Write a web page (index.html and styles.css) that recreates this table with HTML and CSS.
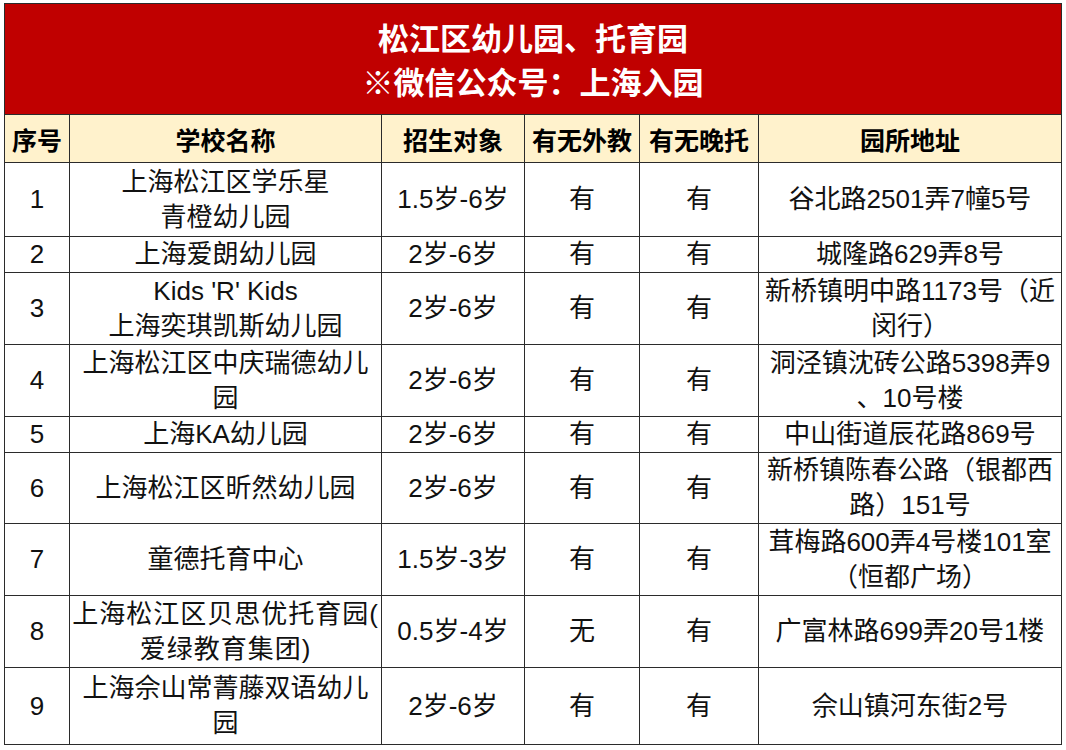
FILE: index.html
```html
<!DOCTYPE html>
<html lang="zh-CN">
<head>
<meta charset="utf-8">
<title>松江区幼儿园、托育园</title>
<link rel="stylesheet" href="styles.css">
</head>
<body>
<div class="sheet">
<table class="list">
  <colgroup>
    <col class="c-no">
    <col class="c-name">
    <col class="c-age">
    <col class="c-foreign">
    <col class="c-late">
    <col class="c-addr">
  </colgroup>
  <thead>
    <tr class="r-title">
      <th colspan="6" class="title">松江区幼儿园、托育园<br>※微信公众号：上海入园</th>
    </tr>
    <tr class="r-head">
      <th>序号</th>
      <th>学校名称</th>
      <th>招生对象</th>
      <th>有无外教</th>
      <th>有无晚托</th>
      <th>园所地址</th>
    </tr>
  </thead>
  <tbody>
    <tr class="r1">
      <td>1</td>
      <td>上海松江区学乐星<br>青橙幼儿园</td>
      <td>1.5岁-6岁</td>
      <td>有</td>
      <td>有</td>
      <td>谷北路2501弄7幢5号</td>
    </tr>
    <tr class="r2">
      <td>2</td>
      <td>上海爱朗幼儿园</td>
      <td>2岁-6岁</td>
      <td>有</td>
      <td>有</td>
      <td>城隆路629弄8号</td>
    </tr>
    <tr class="r3">
      <td>3</td>
      <td>Kids 'R' Kids<br>上海奕琪凯斯幼儿园</td>
      <td>2岁-6岁</td>
      <td>有</td>
      <td>有</td>
      <td>新桥镇明中路1173号（近<br>闵行）</td>
    </tr>
    <tr class="r4">
      <td>4</td>
      <td>上海松江区中庆瑞德幼儿<br>园</td>
      <td>2岁-6岁</td>
      <td>有</td>
      <td>有</td>
      <td>洞泾镇沈砖公路5398弄9<br>、10号楼</td>
    </tr>
    <tr class="r5">
      <td>5</td>
      <td>上海KA幼儿园</td>
      <td>2岁-6岁</td>
      <td>有</td>
      <td>有</td>
      <td>中山街道辰花路869号</td>
    </tr>
    <tr class="r6">
      <td>6</td>
      <td>上海松江区昕然幼儿园</td>
      <td>2岁-6岁</td>
      <td>有</td>
      <td>有</td>
      <td>新桥镇陈春公路（银都西<br>路）151号</td>
    </tr>
    <tr class="r7">
      <td>7</td>
      <td>童德托育中心</td>
      <td>1.5岁-3岁</td>
      <td>有</td>
      <td>有</td>
      <td>茸梅路600弄4号楼101室<br>（恒都广场）</td>
    </tr>
    <tr class="r8">
      <td>8</td>
      <td class="spread">上海松江区贝思优托育园(<br>爱绿教育集团)</td>
      <td>0.5岁-4岁</td>
      <td>无</td>
      <td>有</td>
      <td>广富林路699弄20号1楼</td>
    </tr>
    <tr class="r9">
      <td>9</td>
      <td>上海佘山常菁藤双语幼儿<br>园</td>
      <td>2岁-6岁</td>
      <td>有</td>
      <td>有</td>
      <td>佘山镇河东街2号</td>
    </tr>
  </tbody>
</table>
</div>
</body>
</html>
```
FILE: styles.css
```css
html, body {
  margin: 0;
  padding: 0;
  background: #ffffff;
}

.sheet {
  padding: 3px 0 0 4px;
}

.list {
  border-collapse: collapse;
  table-layout: fixed;
  width: 1057px;
  font-family: "Liberation Sans", "Noto Sans CJK SC", sans-serif;
  color: #111;
}

.c-no { width: 65px; }
.c-name { width: 312px; }
.c-age { width: 143px; }
.c-foreign { width: 115px; }
.c-late { width: 119px; }
.c-addr { width: 303px; }

.list th,
.list td {
  border: 1px solid #2b2b2b;
  padding: 0;
  text-align: center;
  vertical-align: middle;
  white-space: nowrap;
  overflow: hidden;
}

.title {
  background: #c00000;
  color: #ffffff;
  font-family: "Noto Sans CJK SC", sans-serif;
  font-weight: 700;
  font-size: 31px;
  line-height: 44px;
  height: 110px;
  padding-bottom: 2px;
}

.r-head th {
  background: #fff2cc;
  font-family: "Noto Sans CJK SC", sans-serif;
  font-weight: 700;
  font-size: 25px;
  line-height: 30px;
  height: 47px;
  color: #000;
}

.list td {
  font-size: 26px;
  line-height: 35px;
}

.spread {
  letter-spacing: 1px;
}

.r1 td { height: 73px; }
.r2 td { height: 35px; }
.r3 td { height: 71px; }
.r4 td { height: 71px; }
.r5 td { height: 35px; }
.r6 td { height: 70px; }
.r7 td { height: 71px; }
.r8 td { height: 71px; }
.r9 td { height: 76px; }
```
